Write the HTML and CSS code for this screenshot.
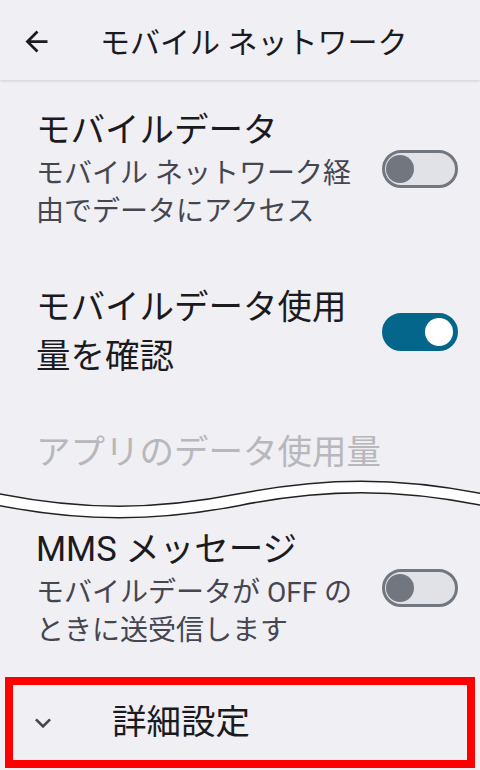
FILE: index.html
```html
<!DOCTYPE html>
<html lang="ja">
<head>
    <meta charset="UTF-8">
    <meta name="viewport" content="width=device-width, initial-scale=1.0">
    <title>モバイル ネットワーク</title>
    <link rel="stylesheet" href="styles.css">
</head>
<body>
    <header class="app-bar">
        <svg class="back-icon" viewBox="0 0 24 24" width="33" height="33">
            <path d="M20 11H7.83l5.59-5.59L12 4l-8 8 8 8 1.41-1.41L7.83 13H20v-2z" fill="#1b1b1f"/>
        </svg>
        <h1 class="app-title">モバイル ネットワーク</h1>
    </header>

    <div class="pref first">
        <div class="pref-text">
            <div class="pref-title">モバイルデータ</div>
            <div class="pref-summary">モバイル ネットワーク経由でデータにアクセス</div>
        </div>
        <div class="switch"><span class="thumb"></span></div>
    </div>

    <div class="pref">
        <div class="pref-text">
            <div class="pref-title">モバイルデータ使用量を確認</div>
        </div>
        <div class="switch on"><span class="thumb"></span></div>
    </div>

    <div class="pref disabled">
        <div class="pref-text">
            <div class="pref-title">アプリのデータ使用量</div>
        </div>
    </div>

    <!-- cut marker between the two screenshots -->
    <div class="cut">
        <svg viewBox="0 0 480 48" width="480" height="48" preserveAspectRatio="none">
            <path d="M-2 22.5 C83 39.2 155 39.2 240 22.5 S397 5.8 482 22.5" fill="none" stroke="#222" stroke-width="13"/>
            <path d="M-2 22.5 C83 39.2 155 39.2 240 22.5 S397 5.8 482 22.5" fill="none" stroke="#fff" stroke-width="10"/>
        </svg>
    </div>

    <div class="pref mms">
        <div class="pref-text">
            <div class="pref-title">MMS メッセージ</div>
            <div class="pref-summary">モバイルデータが OFF のときに送受信します</div>
        </div>
        <div class="switch"><span class="thumb"></span></div>
    </div>

    <div class="advanced">
        <svg class="chevron" viewBox="0 0 24 24" width="32" height="32">
            <path d="M16.59 8.59L12 13.17 7.41 8.59 6 10l6 6 6-6z" fill="#44474e"/>
        </svg>
        <span class="advanced-label">詳細設定</span>
    </div>
</body>
</html>
```

FILE: styles.css
```css
body {
    margin: 0;
    padding: 0;
    background-color: #efeff4;
    font-family: Roboto, "Noto Sans CJK JP", sans-serif;
    color: #1b1b1f;
}

.app-bar {
    height: 80px;
    display: flex;
    align-items: center;
    padding-left: 20px;
    background-color: #efeff4;
    box-shadow: 0 1px 3px rgba(0, 0, 0, 0.14);
    position: relative;
}

.back-icon {
    display: block;
    flex-shrink: 0;
    margin-top: 2px;
}

.app-title {
    margin: 5px 0 0 47px;
    font-size: 30px;
    font-weight: 400;
    line-height: 40px;
}

.pref {
    display: flex;
    align-items: center;
    gap: 24px;
    padding: 26px 22px 26px 36px;
}

.pref-text {
    flex: 1;
    min-width: 0;
}

.pref-title {
    font-size: 34.5px;
    line-height: 49px;
}

.pref-summary {
    font-size: 28px;
    line-height: 38px;
    color: #45464f;
}

.pref.disabled {
    padding-top: 21px;
    padding-bottom: 0;
}

.pref.disabled .pref-title {
    color: #b7b7bc;
}

.pref.mms {
    padding-top: 0;
}

.cut {
    height: 48px;
    overflow: hidden;
}

.cut svg {
    display: block;
}

/* switches */
.switch {
    flex-shrink: 0;
    box-sizing: border-box;
    width: 76px;
    height: 38px;
    border: 3px solid #72777f;
    border-radius: 19px;
    background-color: #e1e2e7;
    display: flex;
    align-items: center;
    padding-left: 1px;
}

.switch .thumb {
    width: 28px;
    height: 28px;
    border-radius: 50%;
    background-color: #72777f;
}

.switch.on {
    border-color: #05668b;
    background-color: #05668b;
    justify-content: flex-end;
    padding: 0 2px 0 0;
}

.switch.on .thumb {
    background-color: #fff;
}

.advanced {
    margin: 1px 5px 0;
    height: 75px;
    border: 8px solid #ff0000;
    display: flex;
    align-items: center;
    padding-left: 14px;
}

.chevron {
    display: block;
    flex-shrink: 0;
}

.advanced-label {
    margin-left: 53px;
    font-size: 34.5px;
    line-height: 49px;
}
```
